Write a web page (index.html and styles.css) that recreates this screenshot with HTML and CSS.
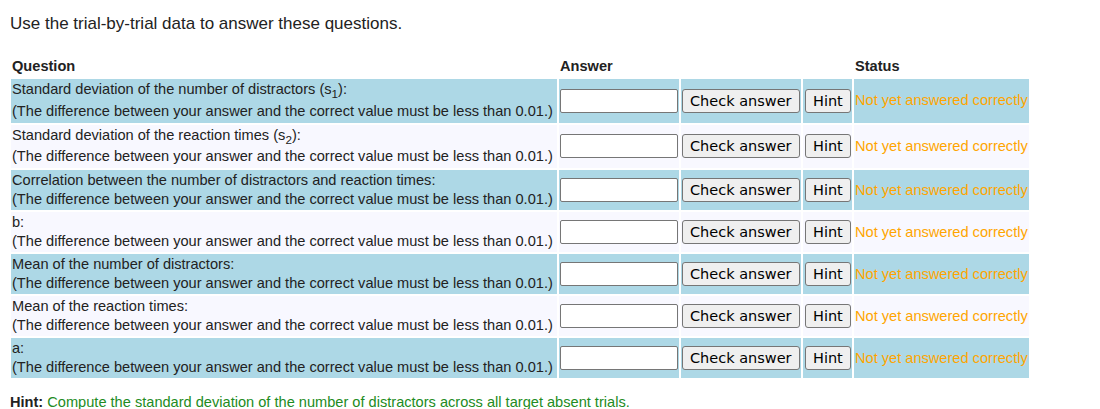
FILE: index.html
```html
<!DOCTYPE html>
<html>
<head>
<meta charset="utf-8">
<title>Trial data questions</title>
<link rel="stylesheet" href="styles.css">
</head>
<body>
<div class="intro">Use the trial-by-trial data to answer these questions.</div>
<table class="qtable">
  <thead>
    <tr>
      <th class="c-q">Question</th>
      <th class="c-a">Answer</th>
      <th class="c-b"></th>
      <th class="c-h"></th>
      <th class="c-s">Status</th>
    </tr>
  </thead>
  <tbody>
    <tr class="odd tall">
      <td class="q">Standard deviation of the number of distractors (s<sub>1</sub>):<br>(The difference between your answer and the correct value must be less than 0.01.)</td>
      <td class="a"><input class="answer-input" type="text"></td>
      <td class="b"><button class="btn">Check answer</button></td>
      <td class="h"><button class="btn">Hint</button></td>
      <td class="s">Not yet answered correctly</td>
    </tr>
    <tr class="even tall">
      <td class="q">Standard deviation of the reaction times (s<sub>2</sub>):<br>(The difference between your answer and the correct value must be less than 0.01.)</td>
      <td class="a"><input class="answer-input" type="text"></td>
      <td class="b"><button class="btn">Check answer</button></td>
      <td class="h"><button class="btn">Hint</button></td>
      <td class="s">Not yet answered correctly</td>
    </tr>
    <tr class="odd">
      <td class="q">Correlation between the number of distractors and reaction times:<br>(The difference between your answer and the correct value must be less than 0.01.)</td>
      <td class="a"><input class="answer-input" type="text"></td>
      <td class="b"><button class="btn">Check answer</button></td>
      <td class="h"><button class="btn">Hint</button></td>
      <td class="s">Not yet answered correctly</td>
    </tr>
    <tr class="even">
      <td class="q">b:<br>(The difference between your answer and the correct value must be less than 0.01.)</td>
      <td class="a"><input class="answer-input" type="text"></td>
      <td class="b"><button class="btn">Check answer</button></td>
      <td class="h"><button class="btn">Hint</button></td>
      <td class="s">Not yet answered correctly</td>
    </tr>
    <tr class="odd">
      <td class="q">Mean of the number of distractors:<br>(The difference between your answer and the correct value must be less than 0.01.)</td>
      <td class="a"><input class="answer-input" type="text"></td>
      <td class="b"><button class="btn">Check answer</button></td>
      <td class="h"><button class="btn">Hint</button></td>
      <td class="s">Not yet answered correctly</td>
    </tr>
    <tr class="even">
      <td class="q">Mean of the reaction times:<br>(The difference between your answer and the correct value must be less than 0.01.)</td>
      <td class="a"><input class="answer-input" type="text"></td>
      <td class="b"><button class="btn">Check answer</button></td>
      <td class="h"><button class="btn">Hint</button></td>
      <td class="s">Not yet answered correctly</td>
    </tr>
    <tr class="odd">
      <td class="q">a:<br>(The difference between your answer and the correct value must be less than 0.01.)</td>
      <td class="a"><input class="answer-input" type="text"></td>
      <td class="b"><button class="btn">Check answer</button></td>
      <td class="h"><button class="btn">Hint</button></td>
      <td class="s">Not yet answered correctly</td>
    </tr>
  </tbody>
</table>
<div class="hint"><b>Hint:</b> <span class="hint-text">Compute the standard deviation of the number of distractors across all target absent trials.</span></div>
</body>
</html>
```
FILE: styles.css
```css
body {
  margin: 8px;
  font-family: "Liberation Sans", Arial, sans-serif;
  color: #222;
  background: #fff;
}

.intro {
  font-size: 17px;
  line-height: 20px;
  margin: 6px 0 22px 2px;
}

.qtable {
  border-collapse: separate;
  border-spacing: 2px;
  table-layout: fixed;
  width: 1022px;
  margin-left: 1px;
  font-size: 14.6px;
}

.qtable th {
  text-align: left;
  font-weight: bold;
  padding: 0 1px 2px;
  line-height: 17px;
  box-sizing: border-box;
}

.c-q { width: 546px; }
.c-a { width: 120px; }
.c-b { width: 120px; }
.c-h { width: 49px; }
.c-s { width: 175px; }

.qtable td {
  padding: 1px;
  vertical-align: middle;
  line-height: 19px;
}

.qtable sub {
  font-size: 0.8em;
  line-height: 17px;
}

.qtable tr.tall { height: 43.5px; }
.qtable tr.tall td.q { vertical-align: top; }

.qtable tr.odd td { background: #add8e6; }
.qtable tr.even td { background: #f8f8ff; }

.qtable td.h { padding-left: 2px; }

.qtable td.s {
  color: #ffa500;
  white-space: nowrap;
}

.answer-input {
  display: block;
  width: 118px;
  height: 24px;
  box-sizing: border-box;
  border: 1px solid #767676;
  border-radius: 2px;
  padding: 1px 2px;
  background: #fff;
  margin: 0;
}

.btn {
  display: block;
  height: 24px;
  box-sizing: border-box;
  margin: 0;
  padding: 0 7px;
  font-family: "DejaVu Sans", Verdana, sans-serif;
  font-size: 14.5px;
  color: #000;
  background: #efefef;
  border: 1px solid #767676;
  border-radius: 3px;
}

.hint {
  margin: 14px 0 0 2px;
  font-size: 14.6px;
}

.hint-text {
  color: #228b22;
}
```
